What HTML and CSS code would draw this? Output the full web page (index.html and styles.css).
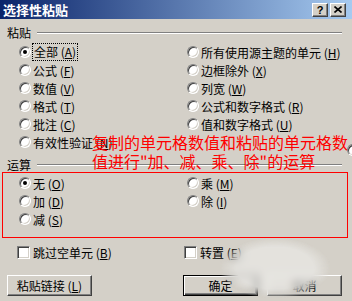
FILE: index.html
```html
<!DOCTYPE html>
<html>
    <head>
        <meta charset="utf-8">
        <title>选择性粘贴</title>
        <link rel="stylesheet" href="styles.css">
    </head>
    <body>

        <div class="titlebar">
            <span class="title">选择性粘贴</span>
            <div class="caption-buttons">
                <span class="cap-btn">?</span>
                <span class="cap-btn">
                    <svg width="8" height="7" viewBox="0 0 8 7"><path d="M0.5 0.5L7.5 6.5M7.5 0.5L0.5 6.5" stroke="#000" stroke-width="1.6"/></svg>
                </span>
            </div>
        </div>

        <div class="group-head"><span>粘贴</span><i class="rule"></i></div>
        <div class="options">
            <label class="opt"><span class="radio checked"></span><span class="focus">全部 (<u>A</u>)</span></label>
            <label class="opt"><span class="radio"></span>所有使用源主题的单元 (<u>H</u>)</label>
            <label class="opt"><span class="radio"></span>公式 (<u>F</u>)</label>
            <label class="opt"><span class="radio"></span>边框除外 (<u>X</u>)</label>
            <label class="opt"><span class="radio"></span>数值 (<u>V</u>)</label>
            <label class="opt"><span class="radio"></span>列宽 (<u>W</u>)</label>
            <label class="opt"><span class="radio"></span>格式 (<u>T</u>)</label>
            <label class="opt"><span class="radio"></span>公式和数字格式 (<u>R</u>)</label>
            <label class="opt"><span class="radio"></span>批注 (<u>C</u>)</label>
            <label class="opt"><span class="radio"></span>值和数字格式 (<u>U</u>)</label>
            <label class="opt"><span class="radio"></span>有效性验证 (<u>N</u>)</label>
        </div>

        <div class="group-head"><span>运算</span><i class="rule"></i></div>
        <div class="ops">
            <div class="options">
                <label class="opt"><span class="radio checked"></span>无 (<u>O</u>)</label>
                <label class="opt"><span class="radio"></span>乘 (<u>M</u>)</label>
                <label class="opt"><span class="radio"></span>加 (<u>D</u>)</label>
                <label class="opt"><span class="radio"></span>除 (<u>I</u>)</label>
                <label class="opt"><span class="radio"></span>减 (<u>S</u>)</label>
            </div>
        </div>

        <div class="checks">
            <label class="opt"><span class="checkbox"></span>跳过空单元 (<u>B</u>)</label>
            <label class="opt"><span class="checkbox"></span>转置 (<u>E</u>)</label>
        </div>

        <div class="buttons">
            <div class="btn link">粘贴链接 (<u>L</u>)</div>
            <div class="btn default">确定</div>
            <div class="btn">取消</div>
        </div>

        <!-- annotation over the dialog -->
        <div class="note">复制的单元格数值和粘贴的单元格数<br>值进行"加、减、乘、除"的运算</div>
        <span class="radio stray"></span>
        <div class="smudge"></div>

    </body>
</html>
```

FILE: styles.css
```css
/** Page **/
html, body {
    margin: 0;
}
body {
    position: relative;
    width: 352px;
    height: 301px;
    overflow: hidden;
    background-color: #d4d0c8;
    font-family: "Noto Sans CJK SC", "Liberation Sans", sans-serif;
    font-size: 12px;
    color: #000;
}
u {
    text-decoration: underline;
}

/** Title bar **/
.titlebar {
    display: flex;
    align-items: center;
    height: 19px;
    padding-left: 3px;
    background: linear-gradient(to right, #0a246a, #a6caf0);
}
.title {
    flex: 1;
    color: #fff;
    font-weight: bold;
    font-size: 13px;
    line-height: 19px;
}
.caption-buttons {
    display: flex;
    gap: 2px;
    margin-right: 6px;
}
.cap-btn {
    display: flex;
    align-items: center;
    justify-content: center;
    width: 16px;
    height: 14px;
    box-sizing: border-box;
    background-color: #d4d0c8;
    border: 1px solid;
    border-color: #fff #404040 #404040 #fff;
    box-shadow: inset -1px -1px 0 #808080;
    font-family: "Liberation Sans", sans-serif;
    font-weight: bold;
    font-size: 11px;
    line-height: 12px;
}

/** Group headers **/
.group-head {
    display: flex;
    align-items: center;
    height: 12px;
    line-height: 12px;
    margin: 8px 10px 0 7px;
}
.group-head .rule {
    flex: 1;
    margin-left: 6px;
    border-top: 1px solid #808080;
    border-bottom: 1px solid #fff;
}

/** Options **/
.options {
    display: grid;
    grid-template-columns: 168px 1fr;
    grid-auto-rows: 18px;
    margin-top: 4px;
    padding-left: 19px;
}
.opt {
    display: flex;
    align-items: center;
    white-space: nowrap;
}
.radio {
    position: relative;
    flex: none;
    width: 12px;
    height: 12px;
    box-sizing: border-box;
    margin-right: 2px;
    border-radius: 50%;
    background-color: #fff;
    border: 1px solid;
    border-color: #808080 #fff #fff #808080;
    box-shadow: inset 1px 1px 0 #404040, inset -1px -1px 0 #d4d0c8;
}
.radio.checked::after {
    content: '';
    position: absolute;
    left: 3px;
    top: 3px;
    width: 4px;
    height: 4px;
    border-radius: 50%;
    background-color: #000;
}
.focus {
    padding: 1px 1px;
    line-height: 14px;
    outline: 1px dotted #000;
}

/** Operation box **/
.ops {
    margin: 1px 4px 0 2px;
    padding: 1px 0 9px 0;
    border: 1px solid #f00;
}
.ops .options {
    margin-top: 0;
    padding-left: 16px;
}

/** Check boxes **/
.checks {
    display: grid;
    grid-template-columns: 167px 1fr;
    grid-auto-rows: 18px;
    margin-top: 5px;
    padding-left: 17px;
}
.checkbox {
    flex: none;
    width: 13px;
    height: 13px;
    box-sizing: border-box;
    margin-right: 3px;
    background-color: #fff;
    border: 1px solid;
    border-color: #808080 #fff #fff #808080;
    box-shadow: inset 1px 1px 0 #404040, inset -1px -1px 0 #d4d0c8;
}

/** Buttons **/
.buttons {
    display: flex;
    gap: 9px;
    margin-top: 14px;
    padding: 0 10px 0 7px;
}
.btn {
    width: 75px;
    height: 21px;
    box-sizing: border-box;
    text-align: center;
    line-height: 19px;
    background-color: #d4d0c8;
    border: 1px solid;
    border-color: #fff #404040 #404040 #fff;
    box-shadow: inset -1px -1px 0 #808080;
}
.btn.link {
    width: 85px;
    margin-right: auto;
}
.btn.default {
    border-color: #000;
    box-shadow: inset 1px 1px 0 #fff, inset -1px -1px 0 #404040, inset -2px -2px 0 #808080;
}

/** Annotation **/
.note {
    position: absolute;
    left: 92px;
    top: 133px;
    color: #f00;
    font-size: 16px;
    line-height: 19px;
    white-space: nowrap;
}
.radio.stray {
    position: absolute;
    left: 347px;
    top: 144px;
}
.smudge {
    position: absolute;
    left: 220px;
    top: 238px;
    width: 110px;
    height: 60px;
    background-color: rgba(240, 240, 238, 0.55);
    backdrop-filter: blur(4px);
    -webkit-mask-image: radial-gradient(ellipse, #000 50%, transparent 72%);
    mask-image: radial-gradient(ellipse, #000 50%, transparent 72%);
}
```
